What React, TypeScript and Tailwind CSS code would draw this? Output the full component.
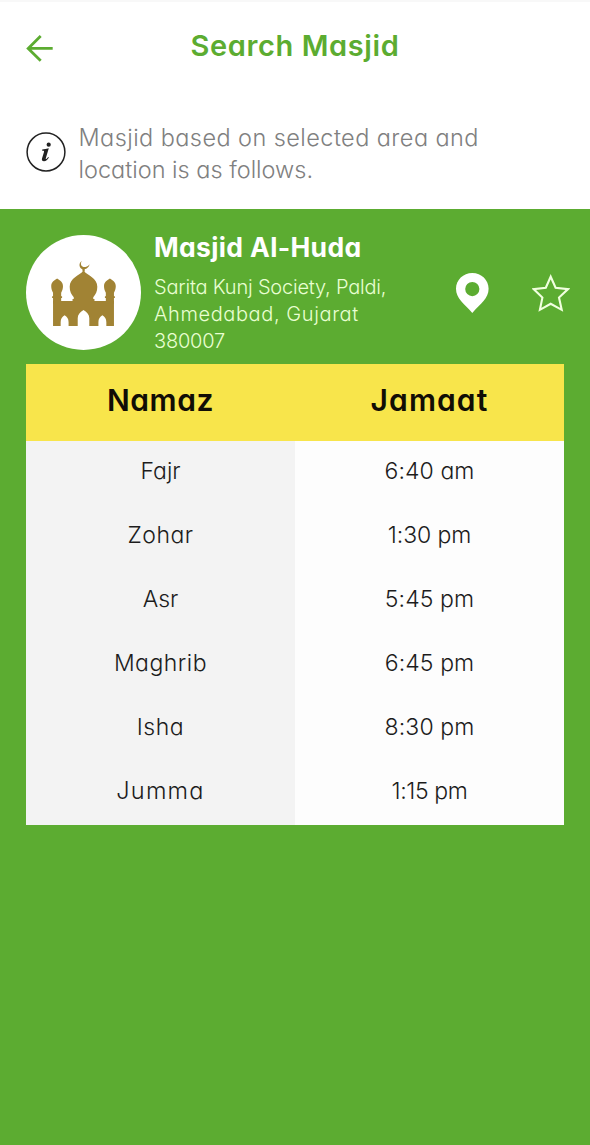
import React from "react";

interface PrayerTime {
  name: string;
  time: string;
  nameClass: string;
  timeClass: string;
}

const prayerTimes: PrayerTime[] = [
  { name: "Fajr", time: "6:40 am", nameClass: "", timeClass: "tracking-[0.1px]" },
  { name: "Zohar", time: "1:30 pm", nameClass: "tracking-[0.5px]", timeClass: "tracking-[-0.1px]" },
  { name: "Asr", time: "5:45 pm", nameClass: "", timeClass: "tracking-[0.1px]" },
  { name: "Maghrib", time: "6:45 pm", nameClass: "tracking-[0.5px]", timeClass: "tracking-[0.1px]" },
  { name: "Isha", time: "8:30 pm", nameClass: "tracking-[0.5px]", timeClass: "tracking-[0.1px]" },
  { name: "Jumma", time: "1:15 pm", nameClass: "tracking-[1.2px] text-[23.5px]", timeClass: "tracking-[-0.4px]" },
];

const BackIcon = () => (
  <svg width="28" height="28" viewBox="0 0 28 28" fill="none" stroke="#5cac31" strokeWidth="2.8">
    <path d="M27.7 14.4H3.2M15.7 2.1 3.2 14.4 15.7 26.7" />
  </svg>
);

const InfoIcon = () => (
  <svg width="40" height="40" viewBox="0 0 40 40">
    <circle cx="20" cy="20" r="18.9" fill="none" stroke="#222" strokeWidth="1.5" />
    <circle cx="22.7" cy="12.7" r="2.1" fill="#222" />
    <path
      d="M16.2 17.4c2.2-.1 4.2-.5 6.6-1.2l-3 10c-.2.8.1 1.1.6.8.7-.4 1.3-1.1 1.8-1.9l.7.4c-1.3 2.3-3 3.8-4.9 3.8-1.7 0-2.5-1.1-2-2.8l2-6.5c.2-.8-.1-1.2-.9-1.2h-.9z"
      fill="#222"
    />
  </svg>
);

const MosqueIcon = () => (
  <svg width="67" height="65" viewBox="0 0 66 64" fill="#a18334">
    {/* Crescent and finial */}
    <path d="M31.300 0c-2.200 3.500.2 6.600 3.700 5.900 1.900-.3 3-1.300 3.900-2.600-.5 3.400-3.200 5-6.600 5-3.800-1.300-4.400-6-1-8.300z" />
    <path d="M32 7.500h2.200v3h-2.200z" />
    {/* Central dome and side minarets */}
    <path d="M33 9.500c4 4.700 13.600 7 13.600 15.800 0 4.500-1.600 7.500-4 10.500v1.500h1.200V41H22.200v-3.700h1.200v-1.500c-2.400-3-4-6-4-10.500 0-8.800 9.600-11.100 13.600-15.800z" />
    <path d="M7 17.200c3 2 5.800 3.500 5.800 7.600 0 2.400-.8 4.300-1.800 6.500v3.500h.9v1.600H11V42H3v-5.600h-.9v-1.600H3v-3.500c-1-2.200-1.800-4.100-1.800-6.500 0-4.100 2.800-5.600 5.800-7.600z" />
    <path d="M59 17.200c3 2 5.800 3.500 5.800 7.600 0 2.400-.8 4.300-1.800 6.500v3.500h.9v1.600H63V42h-8v-5.600h-.9v-1.600h.9v-3.500c-1-2.200-1.800-4.100-1.800-6.500 0-4.100 2.800-5.600 5.800-7.600z" />
    {/* Front wall with arches */}
    <path d="M3 39.500h60V64h-7.500v-3.800c0-3.200-1.500-5-3.900-6.700-2.400 1.700-3.900 3.500-3.900 6.700V64h-9v-7.500c0-3.700-2-6-5.700-8.300-3.700 2.300-5.700 4.600-5.700 8.300V64h-9v-3.800c0-3.200-1.500-5-3.900-6.700-2.400 1.700-3.900 3.500-3.900 6.700V64H3z" />
  </svg>
);

const PinIcon = () => (
  <svg width="33" height="40" viewBox="0 0 33 40" fill="white">
    <path
      fillRule="evenodd"
      d="M16.300 0C7.200 0 0 7 0 15.800 0 25.500 8 30.500 16.300 40 24.600 30.500 32.600 25.500 32.600 15.800 32.600 7 25.400 0 16.300 0zm0 9a7.100 7.100 0 1 1 0 14.200 7.100 7.100 0 0 1 0-14.200z"
    />
  </svg>
);

const StarIcon = () => (
  <svg width="38" height="39" viewBox="0 0 38 39" fill="none" stroke="#f1ffdf" strokeWidth="2.1">
    <path d="M18.700 3.700 23.600 14.700 36 16.100 27 24.600 29.700 36.800 18.700 30.800 7.900 36.800 10.400 24.600 1.600 16.100 13.800 14.700z" />
  </svg>
);

export default function App() {
  return (
    <div className="flex min-h-[1145px] w-[590px] flex-col bg-[#5cac31] font-['Inter',sans-serif] whitespace-nowrap [font-feature-settings:'cv11']">
      <div className="h-[209px] border-t-2 border-[#f8f8f8] bg-white">
        <header className="grid h-[88px] grid-cols-[160px_270px_160px]">
          <button className="mt-8 ml-[25px] self-start" aria-label="Back">
            <BackIcon />
          </button>
          <h1 className="text-center text-[29px] leading-[88px] font-semibold text-[#5cac31]">
            <span className="tracking-[0.6px]">Search Masjid</span>
          </h1>
        </header>

        <div className="flex pl-[26px] pt-[30px]">
          <div className="mt-3">
            <InfoIcon />
          </div>
          <p className="mt-0.5 ml-[12.5px] text-[23.5px] leading-8 font-light text-[#808080]">
            <span className="tracking-[0.43px]">Masjid based on selected area and</span>
            <br />
            <span>location is as follows.</span>
          </p>
        </div>
      </div>

      {/* Masjid details */}
      <section className="flex h-[155px] pl-[26px] pt-[26px]">
        <div className="flex size-[115px] items-center justify-center rounded-full bg-white pt-px">
          <MosqueIcon />
        </div>
        <div className="ml-[13px] w-[302px]">
          <h2 className="text-[26.5px] leading-6 font-bold text-white">
            <span className="tracking-[0.35px]">Masjid Al-Huda</span>
          </h2>
          <p className="mt-[15px] text-[20px] leading-[27px] font-light text-[#e9ffd2]">
            <span className="tracking-[-0.2px]">Sarita Kunj Society, Paldi,</span>
            <br />
            <span className="tracking-[0.6px]">Ahmedabad, Gujarat</span>
            <br />
            <span className="tracking-[-0.2px]">380007</span>
          </p>
        </div>
        <div className="mt-[38px]">
          <PinIcon />
        </div>
        <div className="mt-[38px] ml-[43px]">
          <StarIcon />
        </div>
      </section>

      {/* Timings */}
      <table className="mx-[26px] w-[538px] table-fixed border-collapse text-center">
        <thead>
          <tr className="h-[77px] bg-[#f8e54b] text-[30px] leading-8 text-[#110d05]">
            <th className="pb-[6px] font-semibold">
              <span className="tracking-[0.6px]">Namaz</span>
            </th>
            <th className="pb-[6px] font-semibold">
              <span className="tracking-[1.1px]">Jamaat</span>
            </th>
          </tr>
        </thead>
        <tbody>
          {prayerTimes.map((prayer) => (
            <tr key={prayer.name} className="h-16 text-[23px] leading-8 font-light text-[#1c1c1c]">
              <td className="bg-[#f3f3f3] pb-1">
                <span className={prayer.nameClass}>{prayer.name}</span>
              </td>
              <td className="bg-[#fdfdfd] pb-1">
                <span className={prayer.timeClass}>{prayer.time}</span>
              </td>
            </tr>
          ))}
        </tbody>
      </table>
    </div>
  );
}
